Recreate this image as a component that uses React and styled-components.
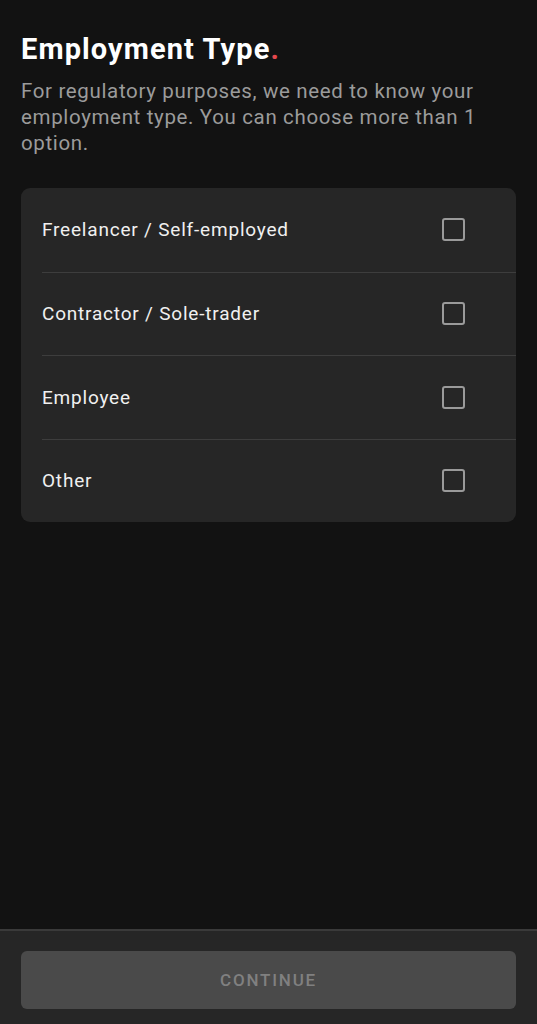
import React from 'react';
import styled, { createGlobalStyle } from 'styled-components';

const GlobalStyle = createGlobalStyle`
  html, body {
    margin: 0;
    padding: 0;
    background: #121212;
  }
  body {
    font-family: Roboto, "Noto Sans", "Liberation Sans", sans-serif;
    -webkit-font-smoothing: antialiased;
  }
`;

const Screen = styled.div`
  display: flex;
  flex-direction: column;
  min-height: 100vh;
  background: #121212;
`;

const Content = styled.div`
  flex: 1;
  padding: 29px 21px 0 21px;
`;

const Title = styled.h1`
  margin: 0;
  font-size: 29px;
  line-height: 40px;
  font-weight: 700;
  color: #ffffff;
  letter-spacing: 1.1px;
  span {
    color: #e5484d;
  }
`;

const Subtitle = styled.p`
  margin: 9px 0 0 0;
  font-size: 20.5px;
  line-height: 26px;
  color: #9b9b9b;
  letter-spacing: 0.65px;
`;

const Card = styled.div`
  margin-top: 32px;
  background: #262626;
  border-radius: 9px;
  overflow: hidden;
`;

const Row = styled.label`
  display: flex;
  align-items: center;
  justify-content: space-between;
  height: 83.5px;
  margin-left: 21px;
  padding-right: 51px;
  border-top: ${p => (p.first ? 'none' : '1.5px solid #3d3d3d')};
  box-sizing: border-box;
`;

const RowText = styled.span`
  font-size: 19px;
  color: #f0f0f0;
  letter-spacing: 0.8px;
`;

const Box = styled.span`
  width: 19px;
  height: 19px;
  border: 2.5px solid #9a9a9a;
  border-radius: 3px;
`;

const Footer = styled.div`
  background: #262626;
  border-top: 2px solid #3a3a3a;
  padding: 20px 21px 15px 21px;
`;

const Button = styled.button`
  display: block;
  width: 100%;
  height: 58px;
  border: none;
  border-radius: 6px;
  background: #4a4a4a;
  color: #808080;
  font-family: Roboto, "Liberation Sans", sans-serif;
  font-size: 17px;
  font-weight: 500;
  letter-spacing: 1.8px;
`;

const options = [
  'Freelancer / Self-employed',
  'Contractor / Sole-trader',
  'Employee',
  'Other',
];

export default function App() {
  return (
    <Screen>
      <GlobalStyle />
      <Content>
        <Title>
          Employment Type<span>.</span>
        </Title>
        <Subtitle>
          For regulatory purposes, we need to know your employment type. You can choose more than 1 option.
        </Subtitle>
        <Card>
          {options.map((o, i) => (
            <Row key={o} first={i === 0}>
              <RowText>{o}</RowText>
              <Box />
            </Row>
          ))}
        </Card>
      </Content>
      <Footer>
        <Button>CONTINUE</Button>
      </Footer>
    </Screen>
  );
}
